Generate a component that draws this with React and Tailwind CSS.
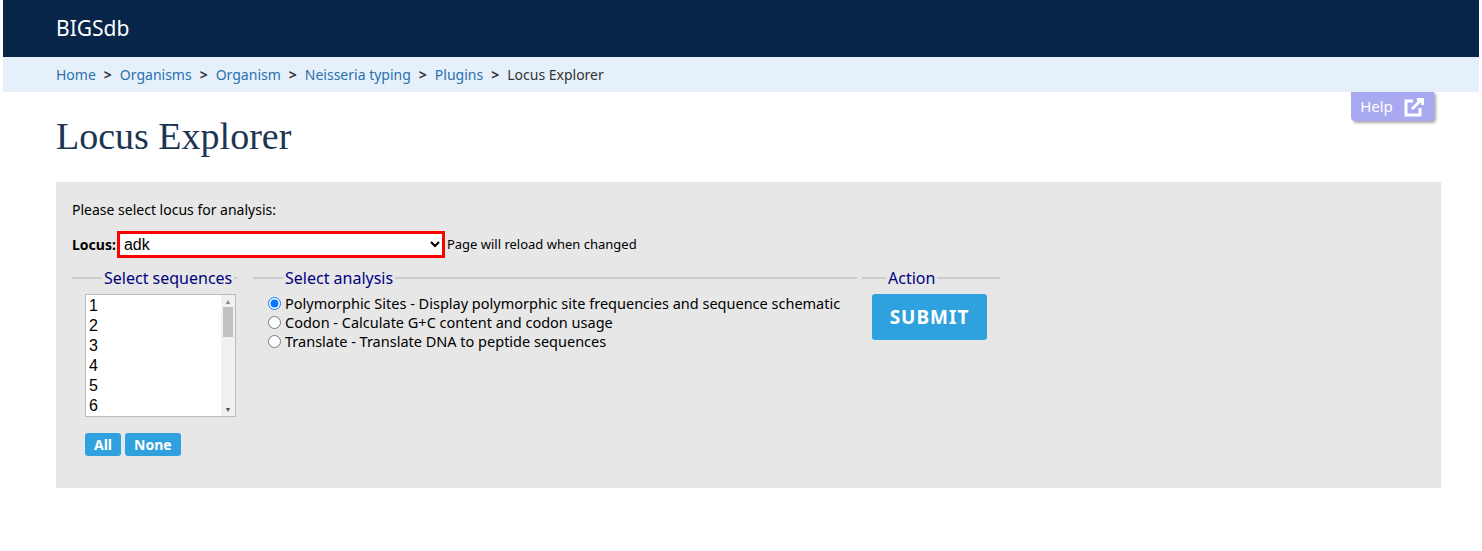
import React from 'react';

const crumbs = ['Home', 'Organisms', 'Organism', 'Neisseria typing', 'Plugins'];

function Legend({ children, offset }) {
  return <legend className={`px-[2px] text-[16px] text-[#000080] leading-none ${offset}`}>{children}</legend>;
}

export default function App() {
  return (
    <div className="w-[1482px] h-[551px] bg-white px-[3px] text-[14px] text-black" style={{ fontFamily: '"Noto Sans", "Open Sans", sans-serif' }}>
      <div className="h-[57px] bg-[#072649] flex items-center pl-[53px] text-white text-[21px]">BIGSdb</div>
      <div className="h-[35px] bg-[#e6f0fb] flex items-center pl-[53px] text-[14px]">
        {crumbs.map((c) => (
          <span key={c} className="flex items-center">
            <span className="text-[#2a70ad]">{c}</span>
            <span className="mx-[8px] font-bold text-[#333]">&gt;</span>
          </span>
        ))}
        <span className="text-[#333]">Locus Explorer</span>
      </div>
      <div className="relative">
        <div className="absolute right-[45px] top-0 h-[29px] w-[83px] bg-[#a9a9f2] rounded-b-[4px] shadow-[2px_2px_3px_rgba(0,0,0,0.35)] flex items-center justify-center gap-[10px] text-white text-[15px]">
          Help
          <svg width="22" height="20" viewBox="0 0 22 20" fill="none" stroke="white" strokeWidth="3">
            <path d="M10 4H3v14h14v-7" />
            <path d="M9 12L19 2" />
            <path d="M14 2.5h5.5V8" />
          </svg>
        </div>
      </div>
      <h1 className="pl-[53px] pt-[16px] h-[90px] text-[38px] text-[#1c3553]" style={{ fontFamily: '"Liberation Serif", serif' }}>Locus Explorer</h1>
      <div className="ml-[53px] mr-[38px] h-[306px] bg-[#e7e7e7] px-[16px] pt-[17px]">
        <div className="h-[20px]">Please select locus for analysis:</div>
        <div className="mt-[12px] flex items-center">
          <span className="font-bold mr-[1px]">Locus:</span>
          <div className="w-[328px] h-[27px] border-[3px] border-[#ff0000] bg-white flex items-center justify-between pl-[4px] pr-[2px] text-[16px]" style={{ fontFamily: '"Liberation Sans", sans-serif' }}>
            <span>adk</span>
            <svg width="10" height="7" viewBox="0 0 10 7"><path d="M1 1l4 4 4-4" stroke="#000" strokeWidth="2" fill="none" /></svg>
          </div>
          <span className="ml-[2px] text-[13px]">Page will reload when changed</span>
        </div>
        <div className="mt-[12px] flex gap-[16px]">
          <fieldset className="w-[165px] border-t-2 border-[#cccccc] pt-[8px]">
            <Legend offset="ml-[30px]">Select sequences</Legend>
            <div className="ml-[13px] w-[151px] h-[123px] bg-white border border-[#bbb] flex">
              <div className="flex-1 pl-[3px] text-[16px] leading-[20px] pt-[1px]" style={{ fontFamily: '"Liberation Sans", sans-serif' }}>
                {[1, 2, 3, 4, 5, 6].map((n) => <div key={n}>{n}</div>)}
              </div>
              <div className="w-[14px] bg-[#f1f1f1] flex flex-col items-center py-[3px]">
                <span className="text-[7px] text-[#888] leading-none">▲</span>
                <div className="w-[10px] h-[30px] bg-[#c1c1c1] mt-[2px] mb-auto" />
                <span className="text-[7px] text-[#555] leading-none">▼</span>
              </div>
            </div>
            <div className="ml-[13px] mt-[16px] flex gap-[4px]">
              <span className="px-[9px] h-[23px] bg-[#2fa1de] rounded-[3px] text-white font-bold flex items-center">All</span>
              <span className="px-[9px] h-[23px] bg-[#2fa1de] rounded-[3px] text-white font-bold flex items-center">None</span>
            </div>
          </fieldset>
          <fieldset className="w-[604px] border-t-2 border-[#cccccc] pt-[8px]">
            <Legend offset="ml-[30px]">Select analysis</Legend>
            <div className="ml-[15px] leading-[19px] text-[14.5px]">
              {[
                'Polymorphic Sites - Display polymorphic site frequencies and sequence schematic',
                'Codon - Calculate G+C content and codon usage',
                'Translate - Translate DNA to peptide sequences',
              ].map((t, i) => (
                <label key={t} className="flex items-center gap-[4px]">
                  <input type="radio" name="a" defaultChecked={i === 0} className="w-[13px] h-[13px] m-0" />
                  {t}
                </label>
              ))}
            </div>
          </fieldset>
          <fieldset className="w-[138px] -ml-[11px] border-t-2 border-[#cccccc] pt-[8px]">
            <Legend offset="ml-[24px]">Action</Legend>
            <div className="ml-[10px] w-[115px] h-[46px] bg-[#2fa1de] rounded-[3px] text-white font-bold text-[19px] tracking-[1px] flex items-center justify-center">SUBMIT</div>
          </fieldset>
        </div>
      </div>
    </div>
  );
}
